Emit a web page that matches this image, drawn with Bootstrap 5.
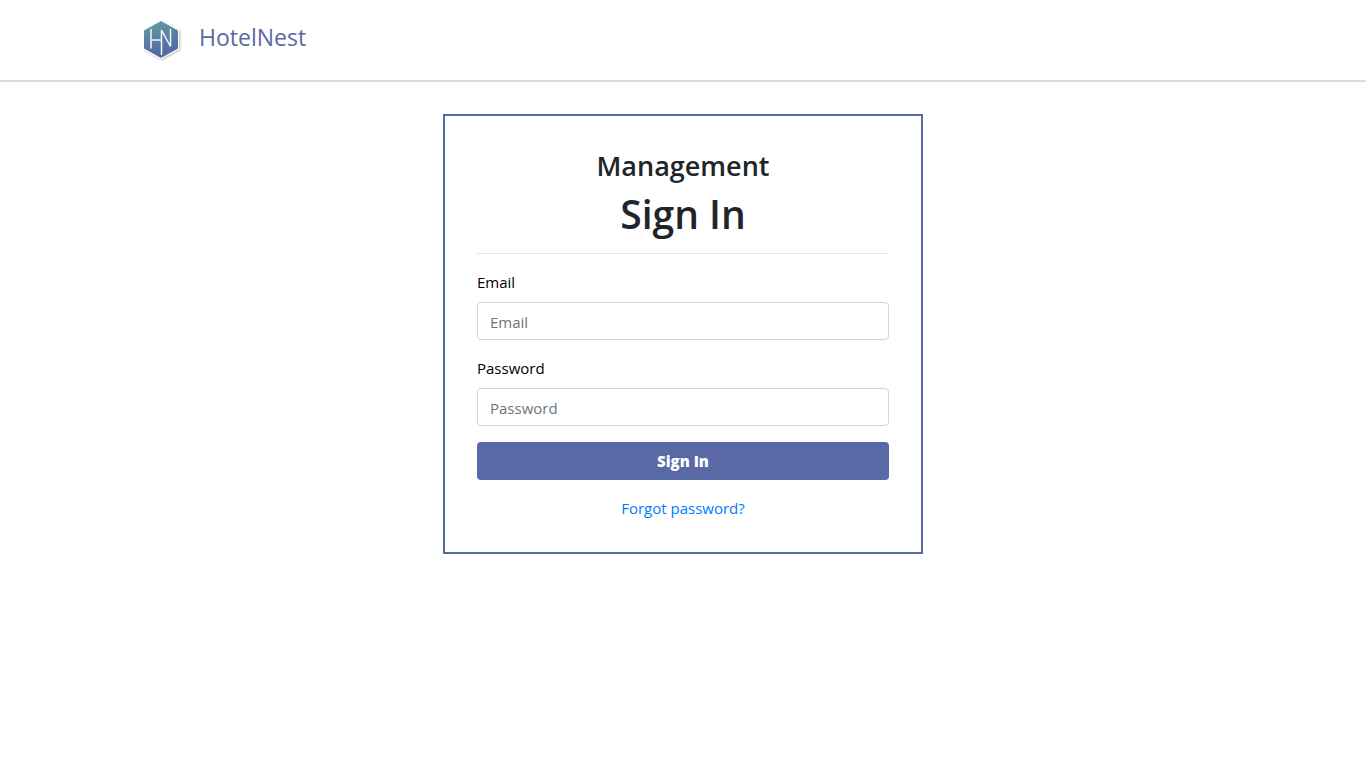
<!DOCTYPE html>
<html lang="en">
<head>
<meta charset="utf-8">
<meta name="viewport" content="width=device-width, initial-scale=1">
<title>HotelNest</title>
<link href="https://cdn.jsdelivr.net/npm/bootstrap@5.3.0/dist/css/bootstrap.min.css" rel="stylesheet">
<style>
  :root { --hn-blue: #5869a5; }
  body { font-family: "Open Sans", "Noto Sans", sans-serif; font-size: 15px; line-height: 24px; color: #212529; }
  .site-header { border-bottom: 2px solid #dcdcdc; }
  .site-header .container { max-width: 1112px; }
  .site-header .navbar { min-height: 80px; }
  .navbar-brand { color: var(--hn-blue); font-size: 23px; line-height: 36px; }
  .navbar-brand:hover { color: var(--hn-blue); }
  .brand-name { padding-bottom: 6px; }
  .sign-in { max-width: 480px; border: 2px solid var(--hn-blue); padding: 32px; }
  .area-title, .page-title { font-weight: 600; }
  .area-title { font-size: 27px; line-height: 35px; }
  .page-title { font-size: 39px; line-height: 46px; }
  .sign-in hr { border-color: #000; opacity: .1; }
  .form-label { color: #000; }
  .form-control { height: 38px; padding: 8px 12px 6px; font-size: 15px; border-color: #ced4da; border-radius: 4px; }
  .form-control::placeholder { color: #6c757d; }
  .btn-sign-in { --bs-btn-color: #fff; --bs-btn-bg: var(--hn-blue); --bs-btn-hover-color: #fff; --bs-btn-hover-bg: #4a5a93; --bs-btn-border-radius: 4px; --bs-btn-font-size: 15px; height: 38px; font-weight: 800; }
  .forgot-link { color: #007bff; }
</style>
</head>
<body>
<header class="site-header">
  <div class="container p-0">
    <nav class="navbar p-0">
      <a class="navbar-brand d-flex align-items-center p-0 ps-3 m-0" href="#">
        <svg class="me-3" width="40" height="42" viewBox="0 0 40 42" aria-hidden="true">
          <defs>
            <linearGradient id="hexFill" x1="0" y1="0" x2=".25" y2="1">
              <stop offset="0" stop-color="#64a29a"/>
              <stop offset=".5" stop-color="#5a83a0"/>
              <stop offset="1" stop-color="#5664a8"/>
            </linearGradient>
            <filter id="hexShadow" x="-20%" y="-20%" width="140%" height="140%">
              <feDropShadow dx="1" dy="1" stdDeviation="0.8" flood-color="#000" flood-opacity=".3"/>
            </filter>
          </defs>
          <path d="M18 1 36 11V30L18 40 0 30V11Z" fill="#fff" filter="url(#hexShadow)"/>
          <path d="M18 2 35 11.500V29.500L18 39 1 29.500V11.500Z" fill="url(#hexFill)"/>
          <path d="M8 10V29.500M8 21H18.500M18.500 36V11L27.500 27.500V10" fill="none" stroke="#f2f6fa" stroke-width="1.500"/>
        </svg>
        <span class="brand-name">HotelNest</span>
      </a>
    </nav>
  </div>
</header>
<main class="px-3 py-2">
  <form class="sign-in mx-auto my-4">
    <h3 class="area-title text-center mb-2">Management</h3>
    <h1 class="page-title text-center mb-0">Sign In</h1>
    <hr class="my-3">
    <div class="mb-3">
      <label class="form-label mb-2" for="email">Email</label>
      <input class="form-control" type="email" id="email" placeholder="Email">
    </div>
    <div class="mb-3">
      <label class="form-label mb-2" for="password">Password</label>
      <input class="form-control" type="password" id="password" placeholder="Password">
    </div>
    <button class="btn btn-sign-in w-100 mb-3" type="submit">Sign In</button>
    <div class="text-center"><a class="forgot-link text-decoration-none" href="#">Forgot password?</a></div>
  </form>
</main>
<script src="https://cdn.jsdelivr.net/npm/bootstrap@5.3.0/dist/js/bootstrap.bundle.min.js"></script>
</body>
</html>
